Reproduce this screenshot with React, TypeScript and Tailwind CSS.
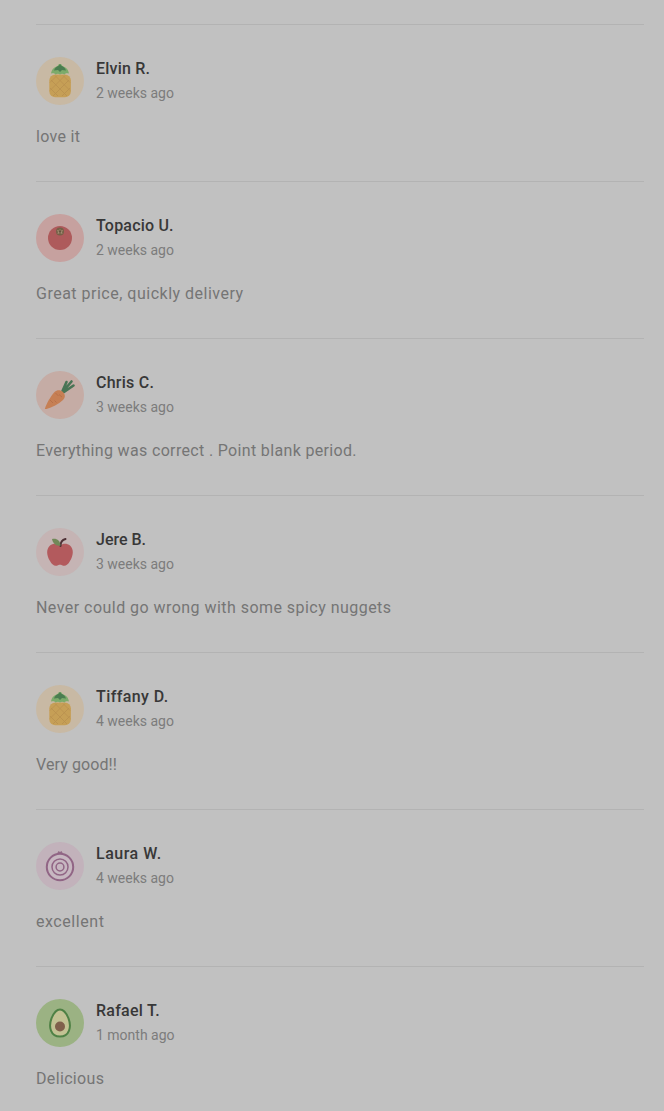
import React from "react";

const Pineapple = () => (
  <svg viewBox="0 0 48 48" className="h-12 w-12 shrink-0">
    <circle cx="24" cy="24" r="24" fill="#c8b9a4" />
    <rect x="13.3" y="17.5" width="21.6" height="22.7" rx="6" fill="#c69f56" />
    <path
      d="M15 23l16 16M19 18.500l15 15M27 18.500l7 7M14 31l8 8M33 23l-16 16M29 18.500l-15 15M21 18.500l-7 7M34 31l-8 8"
      stroke="#b9904f"
      strokeWidth="0.8"
      fill="none"
    />
    <path
      d="M15 16.500c1-5 4-7 6.500-7 .5-2 1.500-2.500 2.500-2.500s2 .5 2.500 2.500c2.500 0 5.500 2 6.500 7-2-.5-3.500-.5-4.500 1-2-1-3-1-4.500 0-1.500-1-2.500-1-4.500 0-1-1.500-2.500-1.500-4.500-1z"
      fill="#7cab6b"
    />
    <path d="M18 13.500c1-3 3-4.500 4.500-4.500l1.500-2 1.500 2c1.500 0 3.500 1.500 4.500 4.500l-4-.5-2 2-2-2z" fill="#4b7d50" />
  </svg>
);

const Tomato = () => (
  <svg viewBox="0 0 48 48" className="h-12 w-12 shrink-0">
    <circle cx="24" cy="24" r="24" fill="#c6a19f" />
    <circle cx="24" cy="24" r="12" fill="#ae5a5b" />
    <circle cx="24" cy="17.500" r="4" fill="#766047" />
    <path d="M21 16l2 .5 1-1.500 1 1.500 2-.5-1 2 .5 2-2.500-1-2.500 1 .5-2z" fill="#a59075" />
    <circle cx="24" cy="17.500" r="1.300" fill="#66533f" />
  </svg>
);

const Carrot = () => (
  <svg viewBox="0 0 48 48" className="h-12 w-12 shrink-0">
    <circle cx="24" cy="24" r="24" fill="#c5aca5" />
    <g stroke="#497455" strokeWidth="2.600" strokeLinecap="round" fill="none">
      <path d="M26.500 20l4-9M27 20.500l8.500-10M28 21l9.500-6.500" />
    </g>
    <path
      d="M9 37.500c1.500-5 5.500-12 9.500-16.500 2.500-2.500 6-2.500 8.500 0s2.500 5.500 0 8c-4.500 4-11 7.500-16.500 9-1 .3-1.800 0-1.500-.5z"
      fill="#c67f54"
    />
    <path d="M19.500 22l3 3M14 29l3 3M26 26l-3-2.500M20.500 31.500l-2-2" stroke="#b46c45" strokeWidth="0.8" />
  </svg>
);

const Apple = () => (
  <svg viewBox="0 0 48 48" className="h-12 w-12 shrink-0">
    <circle cx="24" cy="24" r="24" fill="#c5b4b4" />
    <path
      d="M24 17.500c3-2.500 7-2.500 10 0 4 3.500 3.500 10 0 15.500-2.500 4.500-5 5.500-8 4.200-1.500-.6-2.500-.6-4 0-3 1.300-5.500.3-8-4.200-3.500-5.500-4-12 0-15.500 3-2.500 7-2.500 10 0z"
      fill="#b35a5d"
    />
    <path d="M24.500 18c0-4 1.500-6 5-7" stroke="#4e3035" strokeWidth="2" strokeLinecap="round" fill="none" />
    <path d="M24.500 17.500c-4.500 1-7.500-2-8.500-6.500 4.500-1 8 1 8.500 6.500z" fill="#718858" />
  </svg>
);

const Onion = () => (
  <svg viewBox="0 0 48 48" className="h-12 w-12 shrink-0">
    <circle cx="24" cy="24" r="24" fill="#c2b2bb" />
    <path d="M20.500 12.500l2-3.500 1.500 1 1.500-1 2 3.500z" fill="#926b87" />
    <g stroke="#916585" fill="none">
      <circle cx="24" cy="25" r="13.200" strokeWidth="2" fill="#c7b7c1" />
      <circle cx="24" cy="25" r="8" strokeWidth="1.500" />
      <circle cx="24" cy="25" r="3.900" strokeWidth="1.500" />
    </g>
  </svg>
);

const Avocado = () => (
  <svg viewBox="0 0 48 48" className="h-12 w-12 shrink-0">
    <circle cx="24" cy="24" r="24" fill="#9bb283" />
    <path
      d="M24 10.500c4.500 0 6.700 4.500 8.500 8.800 3.200 8.500 1 18.200-8.500 18.200s-11.700-9.700-8.500-18.200c1.800-4.300 4-8.800 8.500-8.800z"
      fill="#c3c293"
      stroke="#4f8145"
      strokeWidth="2"
    />
    <circle cx="24" cy="27.500" r="5" fill="#80604b" />
  </svg>
);

interface Review {
  name: string;
  nameClass: string;
  date: string;
  text: string;
  textClass: string;
  icon: React.ReactNode;
}

const reviews: Review[] = [
  {
    name: "Elvin R.",
    nameClass: "tracking-[0.2px]",
    date: "2 weeks ago",
    text: "love it",
    textClass: "tracking-[0.3px]",
    icon: <Pineapple />,
  },
  {
    name: "Topacio U.",
    nameClass: "tracking-[0.2px]",
    date: "2 weeks ago",
    text: "Great price, quickly delivery",
    textClass: "tracking-[0.5px]",
    icon: <Tomato />,
  },
  {
    name: "Chris C.",
    nameClass: "tracking-[0.25px]",
    date: "3 weeks ago",
    text: "Everything was correct . Point blank period.",
    textClass: "tracking-[0.34px]",
    icon: <Carrot />,
  },
  {
    name: "Jere B.",
    nameClass: "tracking-normal",
    date: "3 weeks ago",
    text: "Never could go wrong with some spicy nuggets",
    textClass: "tracking-[0.46px]",
    icon: <Apple />,
  },
  {
    name: "Tiffany D.",
    nameClass: "tracking-[0.4px]",
    date: "4 weeks ago",
    text: "Very good!!",
    textClass: "tracking-[0.1px]",
    icon: <Pineapple />,
  },
  {
    name: "Laura W.",
    nameClass: "tracking-[0.5px]",
    date: "4 weeks ago",
    text: "excellent",
    textClass: "tracking-[0.55px]",
    icon: <Onion />,
  },
  {
    name: "Rafael T.",
    nameClass: "tracking-[0.25px]",
    date: "1 month ago",
    text: "Delicious",
    textClass: "tracking-[0.34px]",
    icon: <Avocado />,
  },
];

const ReviewItem = ({ name, nameClass, date, text, textClass, icon }: Review) => {
  return (
    <li className="h-[157px] border-t border-[#b3b3b3] pt-8">
      <div className="flex gap-3">
        {icon}
        <div className="flex flex-col">
          <p className={`text-base leading-6 font-medium text-[#383838] ${nameClass}`}>{name}</p>
          <p className="text-sm leading-6 text-[#7c7c7c]">{date}</p>
        </div>
      </div>
      <p className={`mt-5 text-base leading-6 text-[#757575] ${textClass}`}>{text}</p>
    </li>
  );
};

const App = () => {
  return (
    <div className="h-[1111px] overflow-hidden bg-[#c1c1c1] pt-6 pr-5 pl-9 font-[Roboto,'Liberation_Sans',sans-serif]">
      <ul>
        {reviews.map((review) => (
          <ReviewItem key={review.name} {...review} />
        ))}
      </ul>
    </div>
  );
};

export default App;
